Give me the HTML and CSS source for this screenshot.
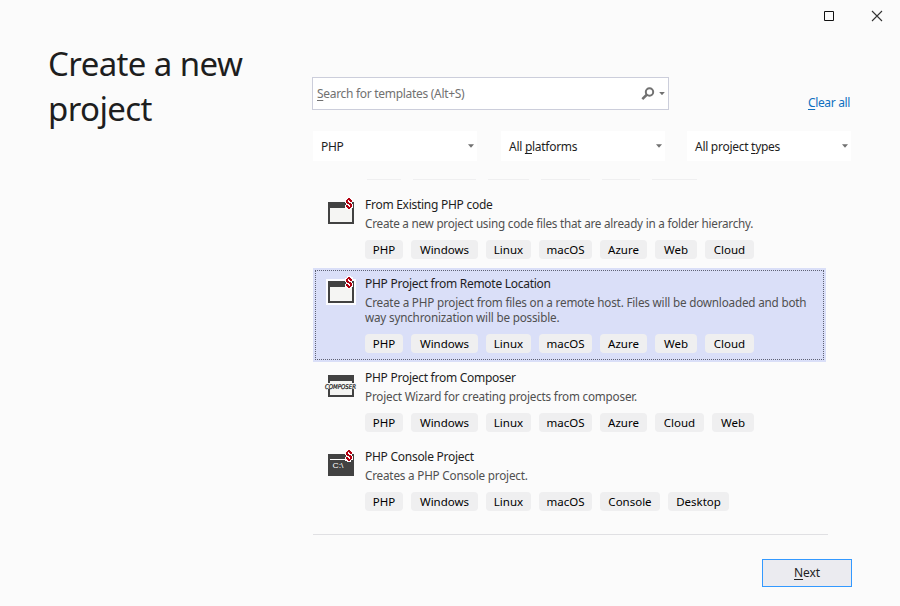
FILE: index.html
```html
<!DOCTYPE html>
<html lang="en">
<head>
<meta charset="utf-8">
<title>Create a new project</title>
<link rel="stylesheet" href="styles.css">
</head>
<body>
<svg class="defs" width="0" height="0" aria-hidden="true">
  <defs>
    <g id="badge">
      <path d="M21 0h4v1h2v4h-1v2h1v4h-2v2h-4v-1h-2v-4h1v-2h-1v-4h2z" fill="#fdfdfd"/>
      <path d="M22 1h2v1h1v1h1v2h-2v-1h-1v-1h-1v2h1v1h2v1h1v3h-1v1h-1v1h-2v-1h-1v-1h-1v-2h2v1h1v1h1v-2h-1v-1h-2v-1h-1v-3h1v-1h1z" fill="#b00010"/>
    </g>
    <g id="window">
      <path d="M2 5h26v22H2z" fill="#424242"/>
      <path d="M4 11h22v14H4z" fill="#f5f5f3"/>
    </g>
  </defs>
</svg>
<div class="window">
  <header class="titlebar">
    <svg width="12" height="12" viewBox="0 0 12 12"><path d="M1.500 1.500h9v9h-9z" fill="none" stroke="#111"/></svg>
    <svg width="12" height="12" viewBox="0 0 12 12"><path d="M1 1l10 10M11 1L1 11" fill="none" stroke="#333" stroke-width="1.100"/></svg>
  </header>
  <main class="main">
    <h1 class="heading">Create a new<br>project</h1>
    <section class="content">
      <div class="search-row">
        <div class="search">
          <span class="search-text"><u>S</u>earch for templates (Alt+S)</span>
          <svg class="lens" width="14" height="14" viewBox="0 0 14 14"><circle cx="8.500" cy="5" r="3.700" fill="none" stroke="#717171" stroke-width="2"/><path d="M6 7.500L1.300 12.200" stroke="#717171" stroke-width="2.500"/></svg>
          <i class="arrow"></i>
        </div>
        <a class="clear"><u>C</u>lear all</a>
      </div>
      <div class="filters">
        <div class="filter"><span>PHP</span><i class="arrow"></i></div>
        <div class="filter"><span>All <u>p</u>latforms</span><i class="arrow"></i></div>
        <div class="filter"><span>All project <u>t</u>ypes</span><i class="arrow"></i></div>
      </div>
      <div class="list">
        <div class="scrolled"><i class="w35"></i><i class="w63"></i><i class="w41"></i><i class="w49"></i><i class="w38"></i><i class="w45"></i></div>
        <article class="item">
          <svg class="icon" width="32" height="32" viewBox="0 0 32 32"><use href="#window"/><use href="#badge"/></svg>
          <div class="body">
            <h2>From Existing PHP code</h2>
            <p class="tight">Create a new project using code files that are already in a folder hierarchy.</p>
            <div class="tags"><span class="php">PHP</span><span class="windows">Windows</span><span class="linux">Linux</span><span class="macos">macOS</span><span class="azure">Azure</span><span class="web">Web</span><span class="cloud">Cloud</span></div>
          </div>
        </article>
        <article class="item selected">
          <svg class="icon" width="32" height="32" viewBox="0 0 32 32"><path d="M0 3h30v26H0z" fill="#fcfcff"/><use href="#window"/><use href="#badge"/></svg>
          <div class="body">
            <h2>PHP Project from Remote Location</h2>
            <p>Create a PHP project from files on a remote host. Files will be downloaded and both<br>way synchronization will be possible.</p>
            <div class="tags"><span class="php">PHP</span><span class="windows">Windows</span><span class="linux">Linux</span><span class="macos">macOS</span><span class="azure">Azure</span><span class="web">Web</span><span class="cloud">Cloud</span></div>
          </div>
        </article>
        <article class="item">
          <svg class="icon" width="32" height="32" viewBox="0 0 32 32"><use href="#window"/><path d="M-1 13h32v6H-1z" fill="#f7f7f5"/><text class="composer" x="-1" y="19" textLength="31" lengthAdjust="spacingAndGlyphs">COMPOSER</text></svg>
          <div class="body">
            <h2>PHP Project from Composer</h2>
            <p>Project Wizard for creating projects from composer.</p>
            <div class="tags"><span class="php">PHP</span><span class="windows">Windows</span><span class="linux">Linux</span><span class="macos">macOS</span><span class="azure">Azure</span><span class="cloud">Cloud</span><span class="web">Web</span></div>
          </div>
        </article>
        <article class="item">
          <svg class="icon" width="32" height="32" viewBox="0 0 32 32"><path d="M2 5h26v22H2z" fill="#424242"/><path d="M4 10.500h17" stroke="#fff"/><text class="prompt" x="6.500" y="19" textLength="11" lengthAdjust="spacingAndGlyphs">C:\</text><use href="#badge"/></svg>
          <div class="body">
            <h2>PHP Console Project</h2>
            <p>Creates a PHP Console project.</p>
            <div class="tags"><span class="php">PHP</span><span class="windows">Windows</span><span class="linux">Linux</span><span class="macos">macOS</span><span class="console">Console</span><span class="desktop">Desktop</span></div>
          </div>
        </article>
      </div>
      <footer class="footer"><button class="next"><span><u>N</u>ext</span></button></footer>
    </section>
  </main>
</div>
</body>
</html>
```
FILE: styles.css
```css
* { box-sizing: border-box; }
body { margin: 0; background: #fbfbfb; color: #1e1e1e; font: 12px/16px "Noto Sans", "Open Sans", sans-serif; overflow: hidden; }
h1, h2, p { margin: 0; font-weight: 400; white-space: nowrap; }
h2 { font-size: 12px; line-height: 16px; letter-spacing: -0.27px; }
u { text-underline-offset: 2px; text-decoration-thickness: 1px; text-decoration-skip-ink: none; }
.defs { display: block; height: 0; }
.window { width: 900px; height: 606px; display: flex; flex-direction: column; }
.titlebar { height: 32px; display: flex; justify-content: flex-end; align-items: center; gap: 36px; padding-right: 17px; }
.main { display: flex; flex: 1; }
.heading { width: 312px; padding: 9px 0 0 48px; font-size: 33px; line-height: 45px; letter-spacing: -0.6px; }
.content { width: 540px; padding-top: 45px; }
.search-row { display: flex; justify-content: space-between; height: 33px; }
.search { width: 357px; height: 33px; border: 1px solid #cccedb; background: #fff; display: flex; align-items: center; padding: 0 3px 0 4px; color: #717171; }
.search-text { flex: 1; letter-spacing: -0.3px; }
.lens { margin-right: 4px; }
.arrow { width: 6px; height: 3.5px; background: #717171; clip-path: polygon(0 0, 100% 0, 50% 100%); }
.clear { color: #0e70c0; padding: 18px 2px 0 0; letter-spacing: -0.35px; }
.filters { display: flex; margin: 21px 0 0 1px; height: 30px; }
.filter { width: 164px; height: 30px; background: #fff; display: flex; justify-content: space-between; align-items: center; padding: 0 3px 0 8px; margin-right: 24px; letter-spacing: -0.28px; }
.filter span { padding-top: 2px; }
.filter + .filter { margin-right: 22px; }
.filter + .filter + .filter { margin-right: 0; }
.list { margin: 18px 0 0 1px; width: 515px; height: 356px; border-bottom: 1px solid #e0e0e3; }
.scrolled { display: flex; gap: 12px; height: 10px; padding-left: 54px; }
.scrolled i { height: 1px; background: #efeff0; }
.w35 { width: 34px; } .w63 { width: 63px; } .w41 { width: 41px; } .w49 { width: 49px; } .w38 { width: 38px; } .w45 { width: 45px; }
.item { width: 513px; display: flex; padding: 8px 0 9px 13px; }
.selected { background: #dadff8; outline: 1px dotted #5f6275; outline-offset: -3px; }
.icon { margin-right: 7px; flex: none; overflow: visible; }
.body p { color: #505050; font-size: 11.7px; line-height: 15px; letter-spacing: -0.19px; margin: 3px 0 9px; }
.body .tight { letter-spacing: -0.23px; }
.tags { display: flex; gap: 8px; height: 19px; }
.tags span { height: 19px; border-radius: 4px; background: #efeff0; color: #000; text-align: center; font-size: 11.5px; line-height: 20px; white-space: nowrap; }
.php { width: 38px; } .windows { width: 67px; } .linux { width: 45px; } .macos { width: 53px; } .azure { width: 47px; } .web { width: 42px; } .cloud { width: 49px; } .console { width: 60px; } .desktop { width: 61px; }
.composer { font: italic 6.500px "DejaVu Sans", sans-serif; fill: #111; stroke: #111; stroke-width: .2px; }
.prompt { font: 7px "Liberation Sans", sans-serif; fill: #fff; }
.footer { display: flex; justify-content: flex-end; padding-top: 24px; }
.next { width: 90px; height: 28px; border: 1px solid #3399ff; background: #ebebf0; color: #1e1e1e; font: inherit; letter-spacing: -0.1px; padding: 0; }
```
